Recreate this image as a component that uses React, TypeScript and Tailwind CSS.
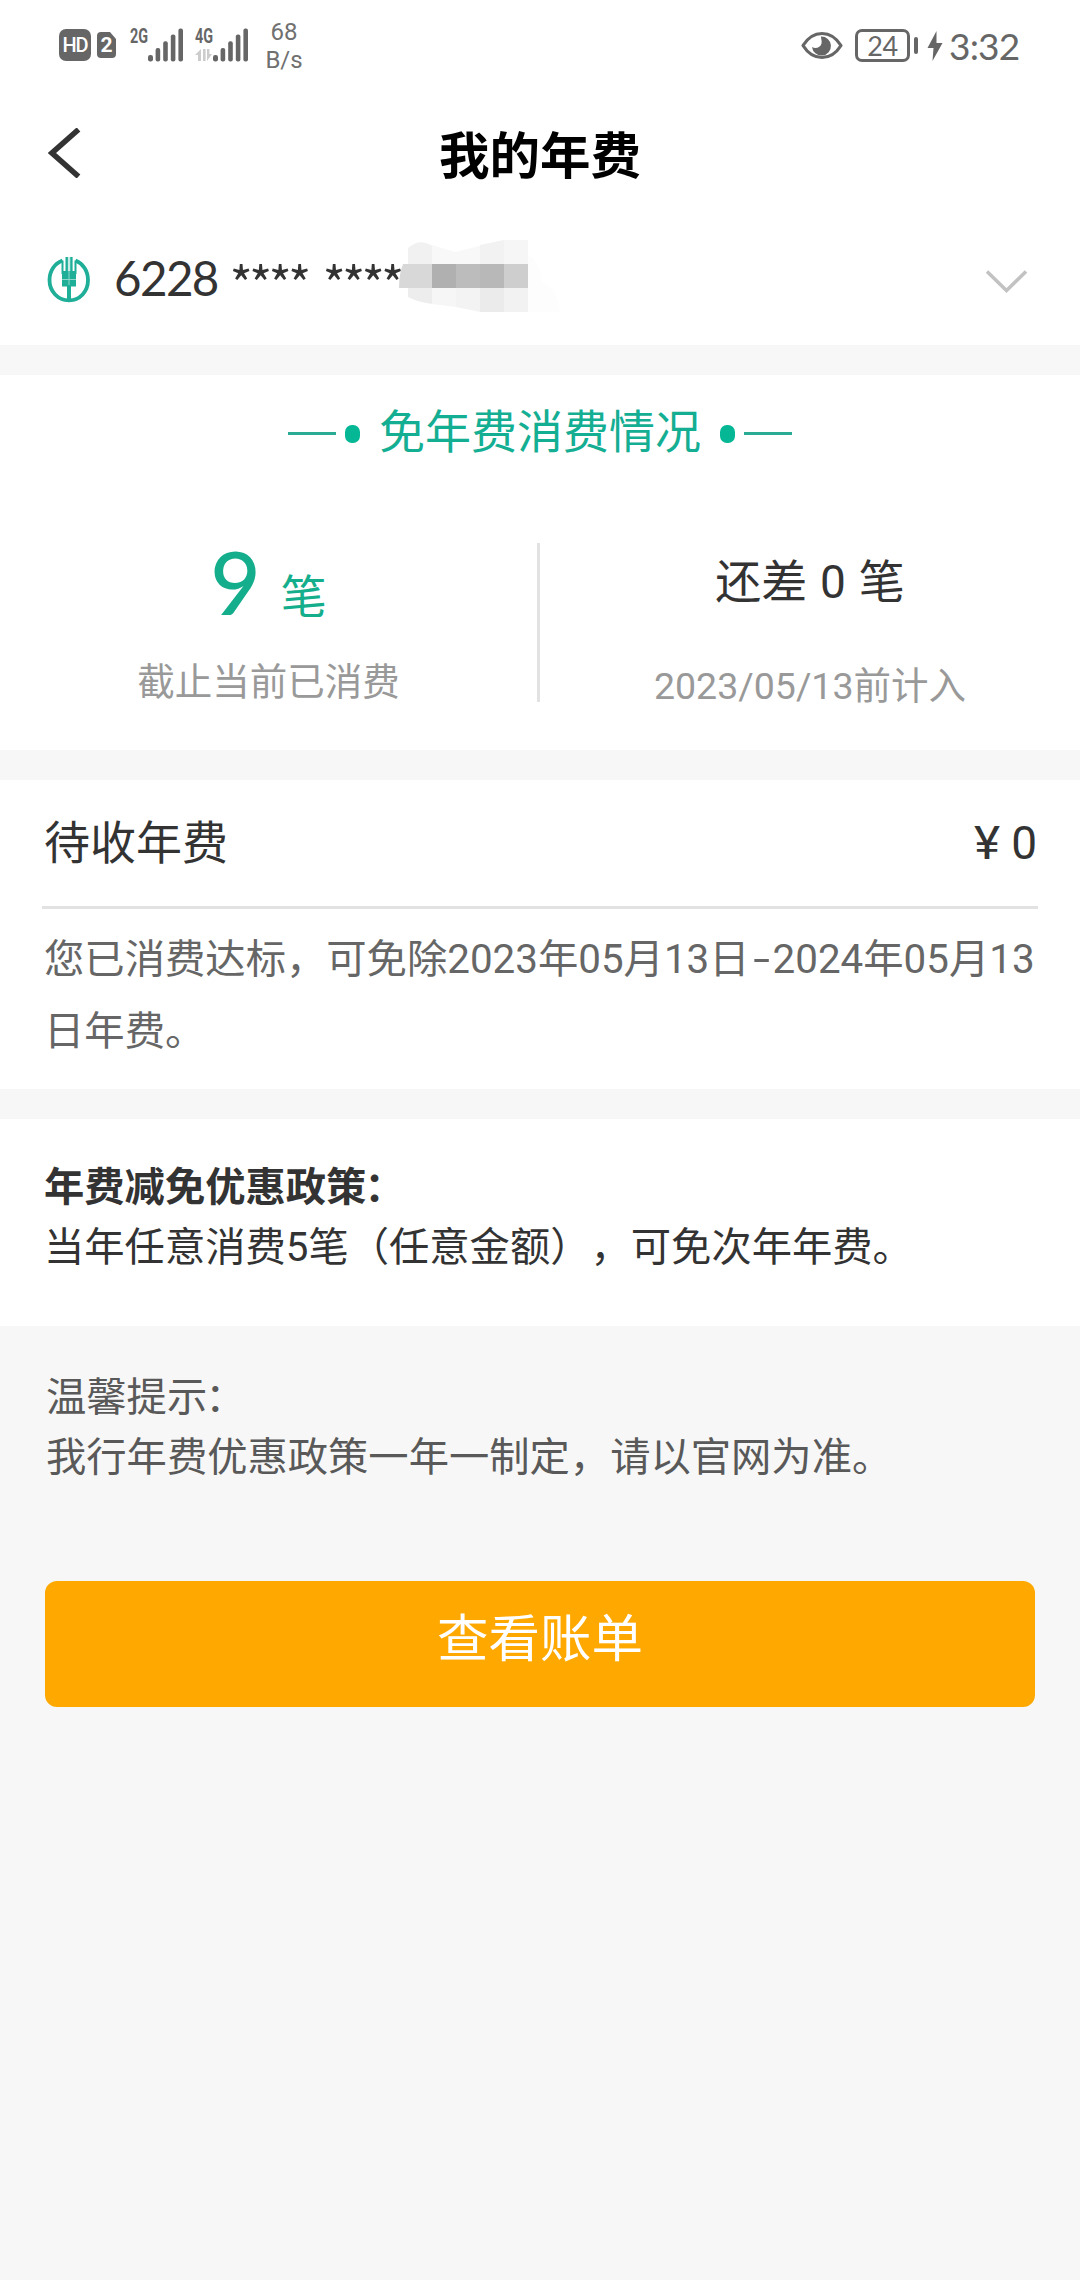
import type { ReactNode } from "react";

const cjk = "font-['Roboto','Noto_Sans_CJK_SC',sans-serif]";

function SignalBars() {
  return (
    <svg width="36" height="34" viewBox="0 0 36 34" fill="#666666">
      <rect x="0" y="27" width="5" height="6.5" rx="2.2" />
      <rect x="7.6" y="20" width="4.6" height="13.5" rx="2" />
      <rect x="15.2" y="13.3" width="4.6" height="20.2" rx="2" />
      <rect x="22.8" y="6.6" width="4.6" height="26.9" rx="2" />
      <rect x="30.4" y="0.4" width="4.6" height="33.1" rx="2" />
    </svg>
  );
}

function StatusBar() {
  return (
    <div className="flex h-[94px] items-start justify-between pl-[59px] pr-[60px] text-[#666666]">
      <div className="flex items-start">
        <span className="mt-[29px] flex h-[32px] w-[32px] items-center justify-center rounded-[7px] bg-[#666666] font-['Roboto',sans-serif] text-[20px] leading-none font-medium tracking-[-1px] text-white">
          HD
        </span>
        <span className="relative mt-[32px] ml-[6px] flex h-[26px] w-[19px] items-center justify-center">
          <svg className="absolute inset-0" width="19" height="26" viewBox="0 0 19 26" fill="#666666">
            <path d="M4 0H13L19 7V22a4 4 0 0 1-4 4H4a4 4 0 0 1-4-4V4a4 4 0 0 1 4-4z" />
          </svg>
          <span className="relative font-['Roboto',sans-serif] text-[21px] leading-none font-bold text-white">2</span>
        </span>
        <span className="mt-[26px] ml-[14px] w-[18px] origin-left scale-x-[0.72] font-['Roboto',sans-serif] text-[20px] leading-[20px] font-bold">
          2G
        </span>
        <span className="mt-[28px]">
          <SignalBars />
        </span>
        <span className="mt-[26px] ml-[11px] flex w-[19px] flex-col">
          <span className="w-[18px] origin-left scale-x-[0.72] font-['Roboto',sans-serif] text-[20px] leading-[20px] font-bold">
            4G
          </span>
          <svg className="mt-[3px]" width="17" height="12" viewBox="0 0 17 12" fill="#cccccc">
            <path d="M0 6 6 0V12H3V6zM8 0h2.6V12H8zM12 0h2.4V5H17L12 12z" />
          </svg>
        </span>
        <span className="mt-[28px] -ml-[1px]">
          <SignalBars />
        </span>
        <span className="mt-[18px] ml-[13px] w-[44px] text-center font-['Roboto',sans-serif] text-[24px] leading-[28px] text-[#707070]">
          68
          <br />
          B/s
        </span>
      </div>
      <div className="flex items-start">
        <svg className="mt-[31px]" width="42" height="29" viewBox="0 0 42 29">
          <path d="M2 14.5C7 6.500 13.500 2.500 21 2.500S35 6.500 40 14.500C35 22.500 28.500 26.500 21 26.500S7 22.500 2 14.500z" fill="none" stroke="#666666" strokeWidth="3.200" strokeLinejoin="round" />
          <path d="M20 5.500a9.500 9.500 0 1 1-9 10.500c3.500 2.500 8.500.5 9.500-3.500.7-3-.8-5.500-.5-7z" fill="#666666" />
        </svg>
        <span className="mt-[29px] ml-[12px] flex h-[33px] w-[55px] items-center justify-center rounded-[7px] border-[3.500px] border-[#666666] font-['Lato',sans-serif] text-[27px] leading-none tracking-[-0.5px]">
          24
        </span>
        <span className="mt-[37px] ml-[4px] h-[17px] w-[4px] rounded-full bg-[#666666]" />
        <svg className="mt-[31px] ml-[9px]" width="16" height="30" viewBox="0 0 16 30" fill="#666666">
          <path d="M9.500 0 .5 17H6.500L5.500 30 15.500 12H9.500z" />
        </svg>
        <span className="mt-[25px] ml-[6px] w-[71px] font-['Lato',sans-serif] text-[37px] leading-[42px] tracking-[-0.8px] whitespace-nowrap">
          3:32
        </span>
      </div>
    </div>
  );
}

function BankLogo() {
  return (
    <svg width="43" height="46" viewBox="0 0 43 46">
      <path d="M15.500 3.500C7.500 6.500 2.500 14 2.500 23c0 11.500 8.500 20.300 19.500 20.300S41 34.500 41 23c0-9-5-16.500-12.500-19.500" fill="none" stroke="#1fae98" strokeWidth="3.800" />
      <path d="M15.500 3.500V17M28.500 3.500V17" stroke="#1fae98" strokeWidth="2" />
      <path d="M18.500 0h2.400v16h-2.400zM23.200 0h2.400v16h-2.400zM15 14h14v15.500H15zM20 17h4v27h-4z" fill="#1fae98" />
      <path d="M15 22.500h14M22 0v28" stroke="#8fd8cb" strokeWidth="1" />
    </svg>
  );
}

function Mosaic() {
  return (
    <svg width="163" height="76" viewBox="0 0 163 76">
      <path d="M9 10Q18-2 30 4L56 12 105 0H129V24H9z" fill="#f8f8f8" />
      <path d="M9 8Q20-2 33 6V24H9z" fill="#f1f1f1" />
      <path d="M81 5 105 0V24H81z" fill="#f2f2f2" />
      <path d="M105 0H129V24H105z" fill="#f6f6f6" />
      <path d="M129 15q12 6 14 27 16 8 18 30H129z" fill="#fdfdfd" />
      <path d="M4 24H33V48H0Q0 34 4 24z" fill="#d8d8d8" />
      <path d="M33 24H57V48H33z" fill="#b0b0b0" />
      <path d="M57 24H81V48H57z" fill="#bcbcbc" />
      <path d="M81 24H105V48H81z" fill="#b8b8b8" />
      <path d="M105 24H129V48H105z" fill="#cecece" />
      <path d="M9 48H33V64Q18 62 9 57z" fill="#ededed" />
      <path d="M33 48H57V67L33 64z" fill="#f6f6f6" />
      <path d="M57 48H81V72L57 67z" fill="#f3f3f3" />
      <path d="M81 48H105V72H81z" fill="#ebebeb" />
      <path d="M105 48H129V72H105z" fill="#f2f2f2" />
    </svg>
  );
}

function MaskedGroup() {
  return (
    <span className="mt-[4px] font-['Noto_Sans_CJK_SC',sans-serif] text-[49px] tracking-[-3.400px]">****</span>
  );
}

function Card({ className, children }: { className: string; children: ReactNode }) {
  return <section className={`bg-white ${className}`}>{children}</section>;
}

export default function App() {
  return (
    <div className={`flex h-[2280px] w-[1080px] flex-col overflow-hidden bg-[#f7f7f7] text-[#333333] [text-spacing-trim:space-all] ${cjk}`}>
      <div className="h-[345px] shrink-0 bg-white">
        <StatusBar />
        <div className="flex h-[122px] items-center px-[48px]">
          <div className="flex flex-1 items-center">
            <svg className="-mt-[5px]" width="33" height="50" viewBox="0 0 33 50" fill="none" stroke="#333333" strokeWidth="5.500">
              <path d="M30.500 1.500 4 25 30.500 48.500" />
            </svg>
          </div>
          <h1 className="pt-[4px] text-[50.500px] leading-[122px] font-bold text-black">我的年费</h1>
          <div className="flex-1" />
        </div>
        <div className="flex h-[129px] items-start pl-[47px] pr-[52px]">
          <span className="mt-[41px]">
            <BankLogo />
          </span>
          <span className="mt-[31px] ml-[24px] flex w-[285px] font-['Lato',sans-serif] text-[47.500px] leading-[62px] whitespace-nowrap">
            <span className="mr-[12px] tracking-[-1.600px]">6228</span>
            <span className="flex gap-[15px]">
              <MaskedGroup />
              <MaskedGroup />
            </span>
          </span>
          <span className="mt-[24px]">
            <Mosaic />
          </span>
          <svg className="mt-[53px] ml-auto" width="43" height="26" viewBox="0 0 43 26" fill="none" stroke="#c2c2c2" strokeWidth="3.500">
            <path d="M2 2.500 21.500 21.500 41 2.500" />
          </svg>
        </div>
      </div>

      <Card className="mt-[30px] h-[375px] shrink-0">
        <div className="flex h-[116px] items-center justify-center">
          <span className="h-[3px] w-[48px] bg-[#2aab94]" />
          <span className="mt-[2px] ml-[9px] h-[18px] w-[15px] rounded-[7px] bg-[#05b795]" />
          <h2 className="mx-[19px] -mt-[2px] text-[46px] leading-[114px] text-[#14ae93]">免年费消费情况</h2>
          <span className="mt-[2px] mr-[9px] h-[18px] w-[15px] rounded-[7px] bg-[#05b795]" />
          <span className="h-[3px] w-[48px] bg-[#2aab94]" />
        </div>
        <div className="flex">
          <div className="flex w-[537px] flex-col items-center text-center">
            <div className="mt-[51px] flex h-[79px] items-baseline text-[#14ae8c]">
              <span className="font-['Lato',sans-serif] text-[87px] leading-[80px] font-medium">9</span>
              <span className="relative -top-[2px] ml-[20px] text-[46px] leading-[80px]">笔</span>
            </div>
            <div className="mt-[31px] text-[37.500px] leading-[60px] text-[#999999]">截止当前已消费</div>
          </div>
          <div className="mt-[52px] h-[159px] w-[3px] bg-[#e2e2e2]" />
          <div className="flex w-[540px] flex-col items-center">
            <div className="mt-[58px] text-[46px] leading-[66px] [word-spacing:1.500px]">还差 0 笔</div>
            <div className="mt-[41px] text-[37.500px] leading-[60px] text-[#999999]">2023/05/13前计入</div>
          </div>
        </div>
      </Card>

      <Card className="mt-[30px] h-[309px] shrink-0">
        <div className="mx-[42px] flex h-[129px] items-center justify-between border-b-[3px] border-[#e2e2e2] pr-[1px] pl-[2px] text-[46px] leading-[126px]">
          <span>待收年费</span>
          <span className="flex">
            <span className="mr-[11px] origin-right scale-x-[1.080]">¥</span>0
          </span>
        </div>
        <p className="mt-[15px] w-[1040px] pl-[44px] text-[40.350px] leading-[72px] text-[#666666]">
          您已消费达标，可免除2023年05月13日
          <span className="inline-block w-[23px] scale-x-[1.500] text-center">-</span>
          2024年05月13
          <br />
          日年费。
        </p>
      </Card>

      <Card className="mt-[30px] h-[207px] shrink-0 pt-[39px] pl-[44px] text-[40.300px] leading-[60px]">
        <p className="font-bold">
          年费减免优惠政策<span className="-ml-[2px]">：</span>
        </p>
        <p>当年任意消费5笔（任意金额），可免次年年费。</p>
      </Card>

      <div className="mt-[42px] pl-[46px] text-[40.300px] leading-[60px] text-[#595959]">
        <p>
          温馨提示<span className="-ml-[2px]">：</span>
        </p>
        <p>我行年费优惠政策一年一制定，请以官网为准。</p>
      </div>

      <button className="mx-[45px] mt-[93px] h-[126px] shrink-0 rounded-[12px] bg-[#ffa900] pb-[8px] text-[51.500px] leading-[118px] text-white">
        查看账单
      </button>
    </div>
  );
}
